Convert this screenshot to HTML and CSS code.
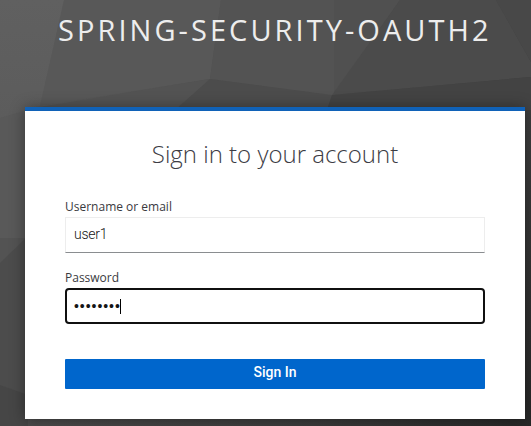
FILE: index.html
```html
<!DOCTYPE html>
<html lang="en">
<head>
<meta charset="utf-8">
<title>Sign in to your account</title>
<link rel="stylesheet" href="styles.css">
</head>
<body>
<svg class="backdrop" viewBox="0 0 531 426" aria-hidden="true">
  <defs>
    <linearGradient id="base" gradientUnits="userSpaceOnUse" x1="0" y1="0" x2="531" y2="426">
      <stop offset="0" stop-color="#616161"/>
      <stop offset=".5" stop-color="#484848"/>
      <stop offset=".75" stop-color="#3c3c3c"/>
      <stop offset="1" stop-color="#282828"/>
    </linearGradient>
    <linearGradient id="left" x1="0" y1="0" x2="0" y2="1">
      <stop offset="0" stop-color="#606060"/>
      <stop offset="1" stop-color="#5c5c5c"/>
    </linearGradient>
  </defs>
  <rect width="531" height="426" fill="url(#base)"/>
  <path d="M0 0H64L40 107L0 118Z" fill="url(#left)"/>
  <path d="M64 0H221L210 79L40 106Z" fill="#585858"/>
  <path d="M221 0H334V96L210 79Z" fill="#535353"/>
  <path d="M334 0H400L334 96Z" fill="#505050"/>
  <path d="M400 0H496L531 62V77L332 95Z" fill="#4b4b4b"/>
  <path d="M496 0H531V62Z" fill="#484848"/>
  <path d="M40 107L210 79L177 110H40Z" fill="#535353"/>
  <path d="M210 79L332 95L327 110H175Z" fill="#4c4c4c"/>
  <path d="M332 95L531 77V110H327Z" fill="#434343"/>
  <path d="M0 118L40 106V238H0Z" fill="#595959"/>
  <path d="M0 238H27L0 263Z" fill="#535353"/>
  <path d="M0 263L28 236V395L0 385Z" fill="#4c4c4c"/>
  <path d="M0 385L28 395V426H0Z" fill="#464646"/>
</svg>
<main class="page">
  <h1 class="realm">spring-security-oauth2</h1>
  <section class="card">
    <h2 class="title">Sign in to your account</h2>
    <form class="form">
      <div class="label">Username or email</div>
      <div class="field">user1</div>
      <div class="label label-password">Password</div>
      <div class="field field-focus"><span class="dots">••••••••</span><span class="caret"></span></div>
      <div class="button">Sign In</div>
    </form>
  </section>
</main>
</body>
</html>
```
FILE: styles.css
```css
* { box-sizing: border-box; }
body {
  margin: 0;
  height: 426px;
  overflow: hidden;
  background: #444;
  color: #151515;
  font-family: "Open Sans", sans-serif;
}
.backdrop {
  position: absolute;
  inset: 0;
  width: 531px;
  height: 426px;
}
.page {
  position: relative;
  width: 531px;
  padding-left: 25px;
}
.realm {
  margin: 0;
  height: 107px;
  padding: 10px 0 0 33px;
  font-size: 29px;
  font-weight: 400;
  line-height: 40px;
  letter-spacing: 3.05px;
  text-transform: uppercase;
  white-space: nowrap;
  color: #ededed;
}
.card {
  width: 500px;
  height: 312px;
  padding: 27px 40px 0;
  border-top: 4px solid #1062b8;
  background: #fff;
  box-shadow: 0 1px 14px rgba(0, 0, 0, .4);
}
.title {
  margin: 0;
  font-size: 24px;
  font-weight: 300;
  line-height: 32px;
  text-align: center;
  color: #3c3c44;
}
.label {
  margin-top: 27px;
  height: 20px;
  font-size: 12px;
  line-height: 19px;
  color: #3a3a3e;
}
.label-password { margin-top: 15px; }
.field {
  display: flex;
  align-items: center;
  height: 36px;
  padding: 0 8px 2px;
  border: 1px solid #ededed;
  border-bottom-color: #8a8d90;
  font-family: Roboto, sans-serif;
  font-size: 14px;
  font-weight: 300;
  letter-spacing: -.25px;
}
.field-focus {
  padding: 0 7px;
  border: 2px solid #101010;
  border-radius: 4px;
}
.dots {
  font-family: "Liberation Sans", sans-serif;
  font-size: 14px;
  letter-spacing: .95px;
}
.caret {
  width: 1px;
  height: 15px;
  margin-left: -1px;
  background: #000;
}
.button {
  height: 30px;
  margin-top: 35px;
  border-radius: 1px;
  background: #06c;
  color: #fff;
  font-family: Roboto, sans-serif;
  font-size: 14px;
  font-weight: 500;
  line-height: 27px;
  text-align: center;
}
```
